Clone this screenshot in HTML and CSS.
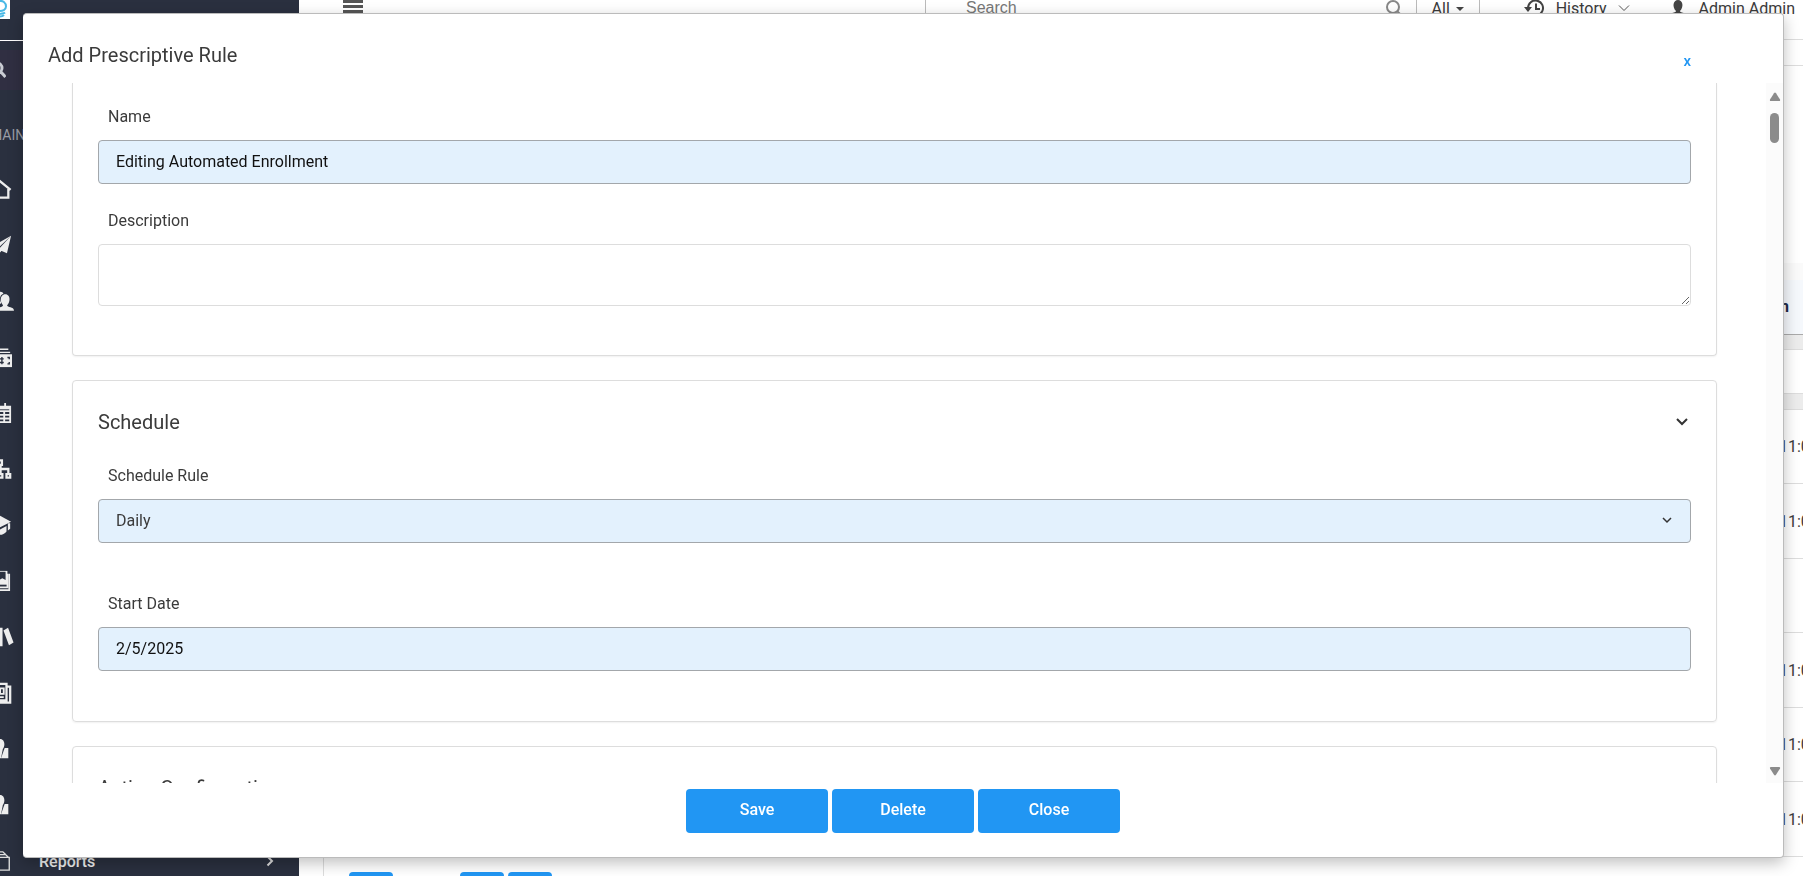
FILE: index.html
```html
<!DOCTYPE html>
<html lang="en">
<head>
    <meta charset="UTF-8">
    <meta name="viewport" content="width=device-width, initial-scale=1.0">
    <title>Add Prescriptive Rule</title>
    <link rel="stylesheet" href="styles.css">
</head>
<body>
    <div class="page">
        <nav class="sidebar">
            <div class="brand">
                <svg class="logo" width="10" height="19" viewBox="0 0 10 19" fill="none" stroke="#4ab9e6" stroke-width="2"><path d="M-2 1.500C3-.5 6 3 6 6.500c0 3-3 5-8 4.500M0 14c2-.6 4-.5 5-1.500M0 16.500c2 0 3-.5 4-1.500"/></svg>
            </div>
            <div class="side-search">
                <svg width="16" height="16" viewBox="0 0 16 16" fill="none" stroke="#c9ccd3" stroke-width="3"><circle cx="7" cy="6" r="5"/><path d="M10.500 9.500l5 5.500"/></svg>
            </div>
            <div class="side-heading">MAIN</div>
            <ul class="menu">
                <li><a href="#" aria-label="Home"><svg class="icon" viewBox="0 0 24 24" fill="none" stroke="#eee" stroke-width="2.500"><path d="M0 13L11 3.500 22.500 13M4 21.500h16V12M4 12v9.500"/></svg></a></li>
                <li><a href="#" aria-label="Messages"><svg class="icon" viewBox="0 0 24 24" fill="#eee"><path d="M23 2L1 14l6 3zM23 2L8 18v5l4-4zM23 2L10.500 17.500l8 3.500z"/></svg></a></li>
                <li><a href="#" aria-label="Users"><svg class="icon icon-wide" viewBox="0 0 24 24" fill="#eee"><path d="M2 19c0-4 5-3 5-5-4-4-2-12 2-12 2 0 3 1 3.500 2C8 5 8 11 10 14c0 2-6 2-6 5z"/><path d="M5 22.500c0-5 7-3 7-6-4-4-3-12 2.500-12s6 8 2 12c0 3 7.500 1 7.500 6z"/></svg></a></li>
                <li><a href="#" aria-label="Payments"><svg class="icon" viewBox="0 0 24 24" fill="none" stroke="#eee"><path stroke-width="1.500" d="M-2 3.500h22M-2 7h24"/><path fill="#eee" stroke="none" d="M-2 9h26v14H-2z"/><path stroke="#2a303f" stroke-width="1.500" d="M8 14h7M8 18h7M10 12v8M13 12v8M19 12.500h2v2M19 19.500h2v-2"/></svg></a></li>
                <li><a href="#" aria-label="Calendar"><svg class="icon" viewBox="0 0 24 24" fill="none" stroke="#eee" stroke-width="2"><path d="M2 5h20v17H2zM2 10h20M2 14h20M2 18h20M9 9v13M15.500 9v13"/><path stroke-width="3" d="M2 6.500h20"/><path d="M16.500 1v5M7 1v5"/></svg></a></li>
                <li><a href="#" aria-label="Organization"><svg class="icon" viewBox="0 0 24 24" fill="none" stroke="#eee" stroke-width="2.500"><path d="M8 2.500h5v5H8zM1 17.500h4v4H1zM9.500 17.500h4v4h-4zM18 17.500h4v4h-4zM11.500 8v9M3 17v-5h17v5"/></svg></a></li>
                <li><a href="#" aria-label="Courses"><svg class="icon" viewBox="0 0 24 24" fill="#eee"><path d="M11 2L-1 8.500l12 6 12-6z"/><path d="M4 13v6c4 5 10 5 14 0v-6l-7 4zM19.500 10H22v6l-2.500 2z"/></svg></a></li>
                <li><a href="#" aria-label="Catalog"><svg class="icon" viewBox="0 0 24 24" fill="none" stroke="#eee" stroke-width="1.800"><path fill="#eee" stroke="none" d="M1 1h18v15H1z"/><path fill="#2a303f" stroke="none" d="M10 2v9l3.500-2 3.500 2V2z"/><path d="M1 19h18V4M21 4v18H4"/></svg></a></li>
                <li><a href="#" aria-label="Library"><svg class="icon icon-wide" viewBox="0 0 24 24" fill="#eee"><path d="M0 3h5v19H0zM6.500 2h5v20h-5zM12.500 5l5-3 6 16-5 3z"/></svg></a></li>
                <li><a href="#" aria-label="News"><svg class="icon" viewBox="0 0 24 24" fill="none" stroke="#eee" stroke-width="2.500"><path d="M1 2h17v18H4a3 3 0 0 1-3-3zM18 5h4v17.500H3"/><path stroke-width="2" d="M5 16.500h10M5 12.500h5M11 7h4v6h-4zM5 7h5"/></svg></a></li>
                <li><a href="#" aria-label="Instructors"><svg class="icon" viewBox="0 0 24 24" fill="#eee"><path d="M2 22v-8l6-2C4 8 6 1 11 1s6 7 3 11l-2 10z"/><path d="M12 22l4-11h4v11z"/></svg></a></li>
                <li><a href="#" aria-label="Managers"><svg class="icon" viewBox="0 0 24 24" fill="#eee"><path d="M2 22v-8l6-2C4 8 6 1 11 1s6 7 3 11l-2 10z"/><path d="M12 22l4-11h4v11z"/></svg></a></li>
                <li><a href="#"><svg class="icon" viewBox="0 0 24 24" fill="none" stroke="#ddd" stroke-width="1.500"><path d="M2 8h19v14H2zM3 5h14l3 3M5 2h9l3 3"/></svg><span>Reports</span><svg class="arrow" width="8" height="12" viewBox="0 0 8 12" fill="none" stroke="#ddd" stroke-width="2"><path d="M1.500 1.500L6 6l-4.500 4.500"/></svg></a></li>
            </ul>
        </nav>
        <div class="content">
            <header class="topbar">
                <button class="hamburger" aria-label="Toggle menu"><svg width="20" height="15" viewBox="0 0 20 15" stroke="#555" stroke-width="3"><path d="M0 2.500h20M0 7.500h20M0 12.500h20"/></svg></button>
                <input class="search" type="text" placeholder="Search" aria-label="Search">
                <svg class="search-icon" width="18" height="18" viewBox="0 0 18 18" fill="none" stroke="#888" stroke-width="2"><circle cx="8" cy="8" r="6"/><path d="M12.500 12.500l4 4"/></svg>
                <button class="filter">All <span class="caret"></span></button>
                <button class="history">
                    <svg width="21" height="18" viewBox="0 0 21 18" fill="none" stroke="#444" stroke-width="2"><path d="M4 9a7.500 7.500 0 1 1 3 6"/><path d="M12 4.500V10h4"/><path fill="#444" stroke="none" d="M0 8h8l-4 5z"/></svg>
                    <span>History</span>
                    <svg width="12" height="8" viewBox="0 0 12 8" fill="none" stroke="#555"><path d="M1 1.500l5 5 5-5"/></svg>
                </button>
                <button class="user">
                    <svg width="16" height="18" viewBox="0 0 16 18" fill="#444"><path d="M0 17c0-4 6-3 6-5C2 8 3 1 8 1s6 7 2 11c0 2 6 1 6 5z"/></svg>
                    <span>Admin Admin</span>
                </button>
            </header>
            <div class="panel">
                <table class="rules">
                    <thead>
                        <tr class="head"><td></td><th>n</th></tr>
                        <tr class="band"><td></td><td></td></tr>
                        <tr class="filters"><td></td><td></td></tr>
                        <tr class="group"><td></td><td></td></tr>
                    </thead>
                    <tbody>
                        <tr><td></td><td>11:0</td></tr>
                        <tr><td></td><td>11:0</td></tr>
                        <tr><td></td><td></td></tr>
                        <tr><td></td><td>11:0</td></tr>
                        <tr><td></td><td>11:0</td></tr>
                        <tr><td></td><td>11:0</td></tr>
                    </tbody>
                </table>
                <div class="pager">
                    <button class="page-btn" aria-label="Previous page"></button>
                    <button class="page-btn push" aria-label="Page 1"></button>
                    <button class="page-btn" aria-label="Next page"></button>
                </div>
            </div>
        </div>
    </div>

    <div class="overlay">
        <div class="modal" role="dialog" aria-labelledby="modal-title">
            <div class="modal-header">
                <h1 id="modal-title">Add Prescriptive Rule</h1>
                <button class="close-x">x</button>
            </div>
            <div class="modal-body">
                <form class="cards" id="rule-form">
                    <section class="card card-general">
                        <label for="name">Name</label>
                        <input class="field filled" id="name" type="text" value="Editing Automated Enrollment">
                        <label for="description">Description</label>
                        <textarea class="field" id="description"></textarea>
                    </section>
                    <section class="card">
                        <div class="card-title">
                            <h2>Schedule</h2>
                            <svg width="12" height="8" viewBox="0 0 12 8" fill="none" stroke="#333" stroke-width="2"><path d="M1 1l5 5 5-5"/></svg>
                        </div>
                        <label for="schedule">Schedule Rule</label>
                        <div class="select-wrap">
                            <select class="field filled" id="schedule">
                                <option>Daily</option>
                            </select>
                            <svg class="select-arrow" width="10" height="7" viewBox="0 0 10 7" fill="none" stroke="#333" stroke-width="1.500"><path d="M1 1l4 4 4-4"/></svg>
                        </div>
                        <label for="start-date">Start Date</label>
                        <input class="field filled" id="start-date" type="text" value="2/5/2025">
                    </section>
                    <section class="card">
                        <div class="card-title">
                            <h2>Action Configuration</h2>
                        </div>
                    </section>
                </form>
                <div class="scrollbar">
                    <svg width="12" height="10" viewBox="0 0 12 10" fill="#8b8b8b"><path d="M5 1.200Q6 0 7 1.200L11 7.500Q11.500 9 10 9H2Q.5 9 1 7.500z"/></svg>
                    <div class="thumb"></div>
                    <svg width="12" height="10" viewBox="0 0 12 10" fill="#8b8b8b"><path d="M5 8.800Q6 10 7 8.800L11 2.500Q11.500 1 10 1H2Q.5 1 1 2.500z"/></svg>
                </div>
            </div>
            <div class="modal-footer">
                <button class="btn" type="submit" form="rule-form">Save</button>
                <button class="btn" type="button">Delete</button>
                <button class="btn" type="button">Close</button>
            </div>
        </div>
    </div>
</body>
</html>
```
FILE: styles.css
```css
* {
    box-sizing: border-box;
}
body {
    margin: 0;
    font-family: Roboto, Arial, sans-serif;
    font-size: 16px;
    color: #3b3b3b;
    background-color: #fff;
}
button {
    padding: 0;
    border: none;
    background: none;
    font: inherit;
    color: inherit;
    cursor: pointer;
}
.page {
    display: flex;
    height: 100vh;
    overflow: hidden;
}

/* Sidebar */
.sidebar {
    flex: 0 0 299px;
    overflow: hidden;
    background-color: #2a303f;
    color: #eee;
}
.brand {
    height: 41px;
    border-bottom: 1px solid #fff;
}
.logo {
    display: block;
    background-color: #fff;
}
.side-search {
    display: flex;
    align-items: center;
    height: 40px;
    margin: 9px 0 36px;
    background-color: #302f42;
}
.side-search svg {
    margin-left: -10px;
}
.side-heading {
    height: 35px;
    margin-left: -10px;
    font-size: 14px;
    line-height: 18px;
    color: #9a9da6;
}
.menu {
    margin: 0;
    padding: 0;
    list-style: none;
}
.menu a {
    display: flex;
    align-items: center;
    height: 56px;
    padding-right: 25px;
    color: #eee;
    font-weight: 500;
    text-decoration: none;
}
.menu span {
    flex: 1;
    margin-left: 27px;
}
.icon {
    width: 22px;
    height: 22px;
    margin-left: -10px;
}
.icon-wide {
    margin-left: -8px;
}

/* Top bar */
.content {
    flex: 1;
    min-width: 0;
}
.topbar {
    display: flex;
    align-items: center;
    height: 40px;
    border-bottom: 1px solid #ddd;
}
.topbar > * {
    height: 40px;
    margin-top: -23px;
}
.hamburger {
    width: 108px;
}
.search {
    flex: 1;
    margin-left: 518px;
    padding: 0 40px;
    border: none;
    border-left: 1px solid #bbb;
    font: 16px "Liberation Sans", Arial, sans-serif;
    outline: none;
}
.search::placeholder {
    color: #777;
}
.search-icon {
    margin-right: 13px;
}
.filter {
    width: 64px;
    border: solid #bbb;
    border-width: 0 1px;
}
.caret {
    display: inline-block;
    margin-left: 2px;
    border: solid transparent;
    border-width: 4px 4px 0;
    border-top-color: #444;
    vertical-align: middle;
}
.history, .user {
    display: flex;
    align-items: center;
    gap: 11px;
}
.history {
    margin-left: 44px;
}
.user {
    gap: 13px;
    margin-right: 8px;
    margin-left: 40px;
}

/* Grid behind the dialog */
.panel {
    margin: 25px 0 0 24px;
    border: solid #ddd;
    border-width: 1px 0 0 1px;
}
.rules {
    width: 100%;
    margin-top: 197px;
    border-top: 17px solid #fafafa;
    border-collapse: separate;
    border-spacing: 0;
    table-layout: fixed;
}
.rules td, .rules th {
    height: 74px;
    padding: 0;
    border-bottom: 1px solid #ddd;
    overflow: hidden;
    white-space: nowrap;
    text-align: left;
}
.rules tbody tr:nth-child(even) td {
    height: 75px;
}
.rules td:last-child, .rules th:last-child {
    width: 24px;
}
.rules th {
    padding: 0 0 2px 1px;
    font-weight: 700;
    color: #1f2b45;
}
.rules .head td, .rules .head th {
    height: 55px;
    background-color: #f5f8fc;
    border-bottom-color: #aaa;
}
.rules .band td {
    height: 15px;
    background-color: #ececec;
}
.rules .filters td {
    height: 44px;
}
.rules .group td {
    height: 16px;
    background-color: #ececec;
}
.pager {
    display: flex;
    gap: 4px;
    padding: 15px 25px;
}
.page-btn {
    width: 44px;
    height: 44px;
    border-radius: 4px;
    background-color: #2196f3;
}
.push {
    margin-left: 63px;
}

/* Dialog */
.overlay {
    position: fixed;
    inset: 0;
    display: flex;
    padding: 13px 19px 18px 23px;
}
.modal {
    flex: 1;
    display: flex;
    flex-direction: column;
    min-width: 0;
    border: solid #bbb;
    border-width: 1px 1px 1px 0;
    border-radius: 4px;
    background-color: #fff;
    box-shadow: 0 5px 15px rgba(0,0,0,0.25);
}
.modal-header {
    display: flex;
    justify-content: space-between;
    align-items: center;
    height: 69px;
    padding: 24px 92px 0 25px;
}
h1, h2 {
    margin: 0;
    font-size: 20px;
    font-weight: 400;
    line-height: 28px;
}
.modal-header h1 {
    margin-bottom: 12px;
}
.close-x {
    color: #2196f3;
    font-size: 15px;
    font-weight: 500;
}
.modal-body {
    flex: 1;
    display: flex;
    min-height: 0;
    overflow: hidden;
}
.cards {
    flex: 1;
    padding: 0 49px;
}
.card {
    margin-bottom: 24px;
    padding: 27px 25px 50px;
    border: 1px solid #ddd;
    border-radius: 4px;
    box-shadow: 0 1px 2px rgba(0,0,0,0.06);
}
.card-general {
    padding-top: 22px;
    padding-bottom: 49px;
    border-top: none;
    border-radius: 0 0 4px 4px;
}
.card-title {
    display: flex;
    justify-content: space-between;
    align-items: center;
    margin-bottom: 28px;
    padding-right: 3px;
}
.card label {
    display: block;
    margin-bottom: 11px;
    padding-left: 10px;
    line-height: 24px;
}
.field {
    display: block;
    width: 100%;
    height: 44px;
    margin-bottom: 25px;
    padding: 0 17px 1px;
    border: 1px solid #ddd;
    border-radius: 4px;
    background-color: #fff;
    font: inherit;
    color: #111;
    outline: none;
}
.field:last-child {
    margin-bottom: 0;
}
.filled {
    border-color: #a3a7ab;
    background-color: #e3f1fd;
}
textarea.field {
    height: 62px;
}
select.field {
    appearance: none;
    margin-bottom: 0;
    padding-bottom: 2px;
    color: #3b3b3b;
}
.select-wrap {
    position: relative;
    margin-bottom: 49px;
}
.select-arrow {
    position: absolute;
    top: 18px;
    right: 19px;
    pointer-events: none;
}
.scrollbar {
    flex: 0 0 17px;
    display: flex;
    flex-direction: column;
    align-items: center;
    padding: 9px 0 7px;
    background-color: #fbfbfb;
}
.thumb {
    width: 9px;
    height: 30px;
    margin: 11px 0 auto;
    border-radius: 5px;
    background-color: #8b8b8b;
}
.modal-footer {
    display: flex;
    justify-content: center;
    gap: 4px;
    height: 74px;
    padding-top: 6px;
}
.btn {
    width: 142px;
    height: 44px;
    padding-bottom: 3px;
    border-radius: 4px;
    background-color: #2196f3;
    color: #fff;
    font-weight: 500;
}
```
